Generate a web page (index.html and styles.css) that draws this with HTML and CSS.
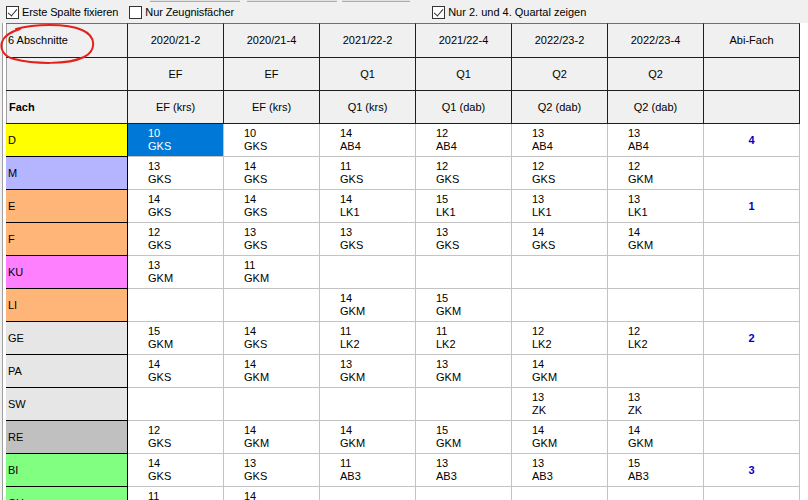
FILE: index.html
```html
<!DOCTYPE html>
<html>
<head>
  <meta charset="UTF-8">
  <title>Laufbahn</title>
  <link rel="stylesheet" href="styles.css">
</head>
<body>

  <div class="toolbar">
    <div class="btn-strip">
      <span class="btn-stub stub-1"></span>
      <span class="btn-stub stub-2"></span>
      <span class="btn-stub stub-3"></span>
    </div>
    <div class="options">
      <label class="opt opt-fix"><span class="box checked"></span>Erste Spalte fixieren</label>
      <label class="opt opt-zeugnis"><span class="box"></span>Nur Zeugnisfächer</label>
      <label class="opt opt-quartal"><span class="box checked"></span>Nur 2. und 4. Quartal zeigen</label>
    </div>
  </div>

  <div class="grid-wrap">
    <table class="grid">
      <colgroup>
        <col class="col-fach">
        <col class="col-abschnitt"><col class="col-abschnitt"><col class="col-abschnitt">
        <col class="col-abschnitt"><col class="col-abschnitt"><col class="col-abschnitt">
        <col class="col-abschnitt">
      </colgroup>
      <thead>
        <tr class="head-top">
          <th class="corner">6 Abschnitte</th>
          <th>2020/21-2</th><th>2020/21-4</th><th>2021/22-2</th>
          <th>2021/22-4</th><th>2022/23-2</th><th>2022/23-4</th>
          <th>Abi-Fach</th>
        </tr>
        <tr>
          <th class="corner"></th>
          <th>EF</th><th>EF</th><th>Q1</th><th>Q1</th><th>Q2</th><th>Q2</th><th></th>
        </tr>
        <tr>
          <th class="corner fach">Fach</th>
          <th>EF (krs)</th><th>EF (krs)</th><th>Q1 (krs)</th><th>Q1 (dab)</th><th>Q2 (dab)</th><th>Q2 (dab)</th><th></th>
        </tr>
      </thead>
      <tbody>
        <tr>
          <td class="subj c-d">D</td>
          <td class="selected">10<br>GKS</td><td>10<br>GKS</td><td>14<br>AB4</td><td>12<br>AB4</td><td>13<br>AB4</td><td>13<br>AB4</td>
          <td class="abi">4</td>
        </tr>
        <tr>
          <td class="subj c-m">M</td>
          <td>13<br>GKS</td><td>14<br>GKS</td><td>11<br>GKS</td><td>12<br>GKS</td><td>12<br>GKS</td><td>12<br>GKM</td>
          <td class="abi"></td>
        </tr>
        <tr>
          <td class="subj c-lang">E</td>
          <td>14<br>GKS</td><td>14<br>GKS</td><td>14<br>LK1</td><td>15<br>LK1</td><td>13<br>LK1</td><td>13<br>LK1</td>
          <td class="abi">1</td>
        </tr>
        <tr>
          <td class="subj c-lang">F</td>
          <td>12<br>GKS</td><td>13<br>GKS</td><td>13<br>GKS</td><td>13<br>GKS</td><td>14<br>GKS</td><td>14<br>GKM</td>
          <td class="abi"></td>
        </tr>
        <tr>
          <td class="subj c-ku">KU</td>
          <td>13<br>GKM</td><td>11<br>GKM</td><td></td><td></td><td></td><td></td>
          <td class="abi"></td>
        </tr>
        <tr>
          <td class="subj c-lang">LI</td>
          <td></td><td></td><td>14<br>GKM</td><td>15<br>GKM</td><td></td><td></td>
          <td class="abi"></td>
        </tr>
        <tr>
          <td class="subj c-gesell">GE</td>
          <td>15<br>GKM</td><td>14<br>GKS</td><td>11<br>LK2</td><td>11<br>LK2</td><td>12<br>LK2</td><td>12<br>LK2</td>
          <td class="abi">2</td>
        </tr>
        <tr>
          <td class="subj c-gesell">PA</td>
          <td>14<br>GKS</td><td>14<br>GKM</td><td>13<br>GKM</td><td>13<br>GKM</td><td>14<br>GKM</td><td></td>
          <td class="abi"></td>
        </tr>
        <tr>
          <td class="subj c-gesell">SW</td>
          <td></td><td></td><td></td><td></td><td>13<br>ZK</td><td>13<br>ZK</td>
          <td class="abi"></td>
        </tr>
        <tr>
          <td class="subj c-re">RE</td>
          <td>12<br>GKS</td><td>14<br>GKM</td><td>14<br>GKM</td><td>15<br>GKM</td><td>14<br>GKM</td><td>14<br>GKM</td>
          <td class="abi"></td>
        </tr>
        <tr>
          <td class="subj c-nat">BI</td>
          <td>14<br>GKS</td><td>13<br>GKS</td><td>11<br>AB3</td><td>13<br>AB3</td><td>13<br>AB3</td><td>15<br>AB3</td>
          <td class="abi">3</td>
        </tr>
        <tr>
          <td class="subj c-nat">CH</td>
          <td>11<br>GKS</td><td>14<br>GKS</td><td></td><td></td><td></td><td></td>
          <td class="abi"></td>
        </tr>
      </tbody>
    </table>

    <!-- hand-drawn marker from the screenshot -->
    <svg class="marker" width="110" height="75" viewBox="0 0 110 75">
      <path d="M16 29 C 34 24, 66 23, 82 30 C 96 36, 97 50, 84 57 C 68 65, 34 64, 14 59 C 3 56, 0 49, 2 42 C 4 36, 10 32, 20 29"
            fill="none" stroke="#e3211c" stroke-width="2" stroke-linecap="round"/>
    </svg>
  </div>

</body>
</html>
```

FILE: styles.css
```css
:root {
  --panel-bg: #f0f0f0;
  --head-line: #1e1e1e;
  --cell-line: #c3c3c3;
  --select-blue: #0078d7;
  --abi-blue: #0000c8;
}
html, body {
  margin: 0;
  padding: 0;
  overflow: hidden;
}
body {
  width: 808px;
  height: 500px;
  background-color: var(--panel-bg);
  font-family: "Liberation Sans", Arial, sans-serif;
  font-size: 11px;
  color: #000;
  position: relative;
}
.toolbar {
  height: 23px;
  background-color: var(--panel-bg);
}
.btn-strip {
  display: flex;
  height: 2px;
}
.btn-stub {
  display: block;
  height: 1px;
  background-color: #e1e1e1;
  border-bottom: 1px solid #adadad;
}
.stub-1 { margin-left: 150px; width: 90px; }
.stub-2 { margin-left: 7px; width: 90px; }
.stub-3 { margin-left: 5px; width: 68px; }
.options {
  display: flex;
  align-items: center;
  height: 21px;
}
.opt {
  display: flex;
  align-items: center;
  line-height: 13px;
}
.opt-fix { margin-left: 6px; }
.opt-zeugnis { margin-left: 11px; letter-spacing: -0.1px; }
.opt-quartal { margin-left: 198px; }
.opt-fix { letter-spacing: -0.1px; }
.box {
  display: inline-block;
  box-sizing: border-box;
  width: 13px;
  height: 13px;
  margin-right: 3px;
  background-color: #fff;
  border: 1px solid #333;
  position: relative;
}
.box.checked::after {
  content: "";
  position: absolute;
  left: 3px;
  top: 0px;
  width: 4px;
  height: 8px;
  border-right: 1px solid #333;
  border-bottom: 1px solid #333;
  transform: rotate(40deg);
}
.grid-wrap {
  margin-left: 2px;
  padding-left: 3px;
  border-left: 1px solid #a0a0a0;
  background-color: #fff;
  height: 477px;
}
.grid {
  border-collapse: separate;
  border-spacing: 0;
  table-layout: fixed;
  width: 794px;
}
.col-fach { width: 122px; }
.col-abschnitt { width: 96px; }
.grid tr { height: 33px; }
.grid tr.head-top { height: 35px; }
.grid th {
  background-color: var(--panel-bg);
  font-weight: normal;
  text-align: center;
  vertical-align: middle;
  padding: 0;
  line-height: 13px;
  border-right: 1px solid var(--head-line);
  border-bottom: 1px solid var(--head-line);
}
.grid tr.head-top th {
  border-top: 1px solid #6e6e6e;
}
.grid th.corner {
  text-align: left;
  padding-left: 2px;
  box-shadow: inset 1px 0 0 #a0a0a0;
}
.grid th.fach {
  font-weight: bold;
  padding-left: 3px;
}
.grid td {
  padding: 0 0 0 20px;
  line-height: 13px;
  vertical-align: middle;
  white-space: nowrap;
  border-right: 1px solid var(--cell-line);
  border-bottom: 1px solid var(--cell-line);
}
.grid td.selected {
  background-color: var(--select-blue);
  color: #fff;
}
.grid td.subj {
  padding-left: 2px;
  border-right-color: #000;
  border-bottom-color: #000;
}
.grid td.abi {
  padding: 0;
  text-align: center;
  font-weight: bold;
  color: var(--abi-blue);
}
.c-d { background-color: #ffff00; }
.c-m { background-color: #b4b4ff; }
.c-lang { background-color: #ffb478; }
.c-ku { background-color: #ff80ff; }
.c-gesell { background-color: #e6e6e6; }
.c-re { background-color: #c0c0c0; }
.c-nat { background-color: #80ff80; }
.marker {
  position: absolute;
  left: 0;
  top: 0;
  pointer-events: none;
}
```
